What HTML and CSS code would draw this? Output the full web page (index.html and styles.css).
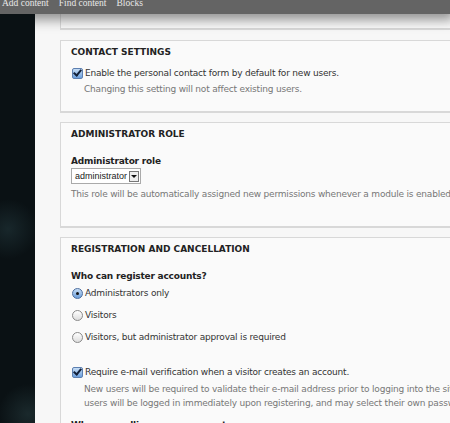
FILE: index.html
```html
<!DOCTYPE html>
<html lang="en">
  <head>
    <meta charset="UTF-8" />
    <title>Account settings</title>
    <link rel="stylesheet" href="styles.css">
  </head>
  <body>
    <div class="toolbar">
      <a href="#">Add content</a>
      <a href="#">Find content</a>
      <a href="#">Blocks</a>
    </div>

    <div class="page">
      <div class="sidebar"></div>

      <div class="main">
        <div class="fieldset prev"></div>

        <div class="fieldset contact">
          <h3>Contact settings</h3>
          <div class="check">
            <span class="box checked"></span>
            <span>Enable the personal contact form by default for new users.</span>
          </div>
          <p class="desc">Changing this setting will not affect existing users.</p>
        </div>

        <div class="fieldset role">
          <h3>Administrator role</h3>
          <label class="label">Administrator role</label>
          <div class="select">
            <span>administrator</span>
            <span class="arrow"></span>
          </div>
          <p class="desc flat">This role will be automatically assigned new permissions whenever a module is enabled.</p>
        </div>

        <div class="fieldset register">
          <h3>Registration and cancellation</h3>
          <label class="label">Who can register accounts?</label>
          <div class="radio first"><span class="dot on"></span>Administrators only</div>
          <div class="radio"><span class="dot"></span>Visitors</div>
          <div class="radio"><span class="dot"></span>Visitors, but administrator approval is required</div>

          <div class="check spaced">
            <span class="box checked"></span>
            <span>Require e-mail verification when a visitor creates an account.</span>
          </div>
          <p class="desc long">New users will be required to validate their e-mail address prior to logging into the site, and will be assigned a system-generated password. With this setting disabled,<br>users will be logged in immediately upon registering, and may select their own passwords during registration.</p>
          <label class="label next">When cancelling a user account</label>
        </div>
      </div>
    </div>
  </body>
</html>
```

FILE: styles.css
```css
body {
  margin: 0;
  width: 450px;
  height: 423px;
  overflow: hidden;
  background: #f7f7f7;
  font-family: "DejaVu Sans", sans-serif;
  font-size: 9px;
  letter-spacing: -0.2px;
  line-height: 12px;
  color: #333;
}

.toolbar {
  position: relative;
  z-index: 2;
  height: 14px;
  background: #646464;
  display: flex;
  gap: 10px;
  padding-left: 2px;
  box-shadow: 0 2px 12px 4px rgba(90, 90, 90, 0.65);
}

.toolbar a {
  font-family: "Liberation Serif", serif;
  font-size: 9.5px;
  letter-spacing: 0;
  line-height: 8px;
  color: #e8e8e8;
  text-decoration: none;
  margin-top: -1px;
}

.page {
  display: flex;
  height: 409px;
}

.sidebar {
  position: relative;
  z-index: 3;
  width: 35px;
  flex-shrink: 0;
  background:
    radial-gradient(ellipse 30px 30px at 8px 215px, #18272b, transparent),
    radial-gradient(ellipse 30px 30px at 28px 400px, #1a292c, transparent),
    #0a1114;
}

.main {
  flex: 1;
  padding-left: 25px;
  overflow: hidden;
}

.fieldset {
  width: 600px;
  background: #fafafa;
  border: 1px solid #d8d8d8;
  border-bottom: 2px solid #d8d8d8;
  padding: 0 10px;
  margin-bottom: 9px;
}

.fieldset.prev {
  height: 14px;
  padding: 0;
  border-top: none;
  margin-bottom: 10px;
}

.contact {
  padding-bottom: 16px;
}

.role {
  padding-bottom: 26px;
}

h3 {
  margin: 0;
  padding-top: 5px;
  font-size: 9px;
  letter-spacing: 0;
  font-weight: bold;
  text-transform: uppercase;
  color: #222;
}

.check {
  display: flex;
  align-items: center;
  gap: 2px;
  color: #333;
  margin-top: 9px;
}

.check.spaced {
  margin-top: 23px;
}

.box {
  width: 9px;
  height: 9px;
  border: 1px solid #5c7fb0;
  border-radius: 2px;
  background: linear-gradient(#c6ddf5, #6c9fdc);
  margin-left: 1px;
  position: relative;
}

.box.checked::after {
  content: "";
  position: absolute;
  left: 2px;
  top: -1px;
  width: 3px;
  height: 6px;
  border: solid #12213a;
  border-width: 0 2px 2px 0;
  transform: rotate(40deg);
}

.desc {
  margin: 4px 0 0 13px;
  color: #777;
}

.desc.flat {
  margin-left: 0;
}

.desc.long {
  line-height: 14px;
  white-space: nowrap;
}

.label {
  display: block;
  margin-top: 15px;
  font-size: 9px;
  font-weight: bold;
  color: #222;
}

.label.next {
  margin-top: 9px;
}

.select {
  display: flex;
  align-items: center;
  justify-content: space-between;
  width: 65px;
  height: 14px;
  margin-top: 1px;
  border: 1px solid #aaa;
  background: #fff;
  font-family: "Liberation Sans", sans-serif;
  font-size: 9px;
  letter-spacing: 0;
  color: #222;
  padding-left: 3px;
}

.arrow {
  width: 8px;
  height: 9px;
  border: 1px solid #777;
  margin-right: 1px;
  background: #eee;
  position: relative;
}

.arrow::after {
  content: "";
  position: absolute;
  left: 1px;
  top: 3px;
  border: 3px solid transparent;
  border-top: 3px solid #111;
}

.radio {
  display: flex;
  align-items: center;
  gap: 2px;
  margin-top: 10px;
  height: 12px;
}

.radio.first {
  margin-top: 5px;
}

.dot {
  width: 9px;
  height: 9px;
  border-radius: 50%;
  border: 1px solid #8a8a8a;
  background: linear-gradient(#fff, #ddd);
  margin-left: 1px;
  position: relative;
}

.dot.on {
  border-color: #4d6e9e;
  background: linear-gradient(#c6ddf5, #6d9fdb);
}

.dot.on::after {
  content: "";
  position: absolute;
  left: 3px;
  top: 3px;
  width: 3px;
  height: 3px;
  border-radius: 50%;
  background: #111;
}
```
